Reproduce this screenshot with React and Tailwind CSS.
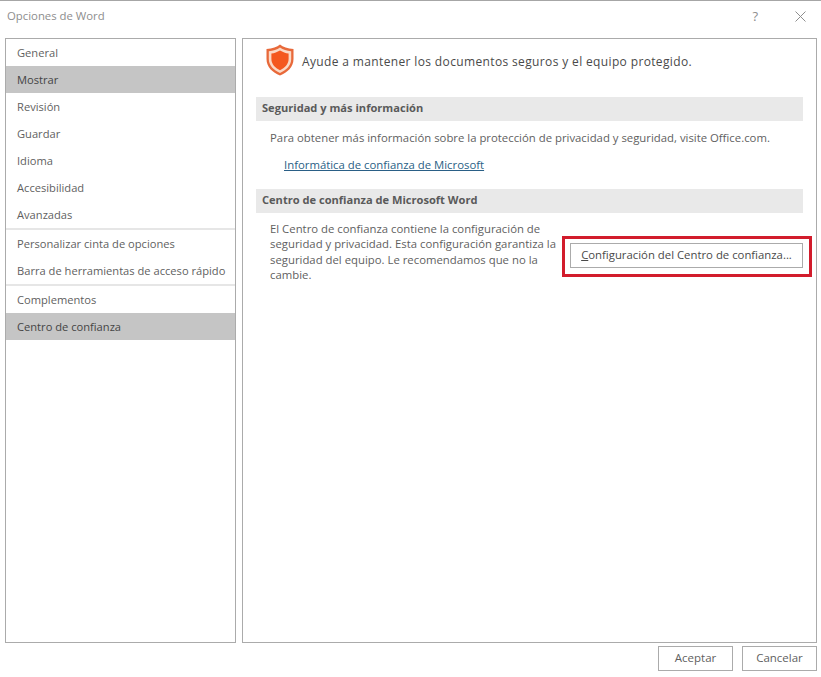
import React from 'react';

const navGroups = [
  [
    { label: 'General' },
    { label: 'Mostrar', active: true },
    { label: 'Revisión' },
    { label: 'Guardar' },
    { label: 'Idioma' },
    { label: 'Accesibilidad' },
    { label: 'Avanzadas' },
  ],
  [{ label: 'Personalizar cinta de opciones' }, { label: 'Barra de herramientas de acceso rápido' }],
  [{ label: 'Complementos' }, { label: 'Centro de confianza', active: true }],
];

const ShieldIcon = () => (
  <svg width="28" height="32" viewBox="0 0 28 32" className="shrink-0">
    <path d="M14 0.5 C17 3 21.5 4.6 27.5 5 V15 C27.5 23 21.5 28.5 14 31.5 C6.5 28.5 0.5 23 0.5 15 V5 C6.5 4.6 11 3 14 0.5 Z" fill="#e8693a" />
    <path d="M14 3.4 C17 5.4 20.8 6.8 25.2 7.2 V15 C25.2 21.6 20.2 26.2 14 29 C7.8 26.2 2.8 21.6 2.8 15 V7.2 C7.2 6.8 11 5.4 14 3.4 Z" fill="#fbd9c6" />
    <path d="M14 6.4 C16.8 8 19.6 9.1 22.6 9.5 V15 C22.6 20.2 18.8 23.8 14 26.2 C9.2 23.8 5.4 20.2 5.4 15 V9.5 C8.4 9.1 11.2 8 14 6.4 Z" fill="#f4581f" />
  </svg>
);

const SectionHeader = ({ children }) => (
  <div className="h-6 bg-[#e9e9e9] pl-[6px] pb-[2px] flex items-center text-[11.1px] font-bold text-[#5a5a5a]">{children}</div>
);

const App = () => {
  return (
    <div className="w-[821px] h-[677px] overflow-hidden bg-white flex flex-col border-t border-[#a6a6a6] text-[11.35px] text-[#5f5f5f] font-['Open_Sans','Noto_Sans',sans-serif]">
      <div className="h-[37px] shrink-0 flex items-center justify-between pl-[7px] pr-[15px] pb-[7px]">
        <span className="text-[#8e8e8e]">Opciones de Word</span>
        <div className="flex items-center gap-[37px]">
          <span className="text-[#8e8e8e] text-[13px] leading-none">?</span>
          <svg width="11" height="11" viewBox="0 0 11 11" stroke="#8e8e8e" strokeWidth="1"><path d="M0.5 0.5 L10.5 10.5 M10.5 0.5 L0.5 10.5" /></svg>
        </div>
      </div>

      <div className="h-[605px] shrink-0 flex gap-[6px] pl-[5px] pr-[4px]">
        <nav className="w-[231px] border border-[#ababab] text-[11.15px]">
          {navGroups.map((group, i) => (
            <div key={i} className={i > 0 ? 'border-t-2 border-[#e6e6e6]' : ''}>
              {group.map((item) => (
                <div
                  key={item.label}
                  className={`h-[27px] pl-[11px] pt-[2px] flex items-center whitespace-nowrap ${item.active ? 'bg-[#c5c5c5] text-[#444444]' : ''}`}
                >
                  {item.label}
                </div>
              ))}
            </div>
          ))}
        </nav>

        <main className="flex-1 border border-[#ababab] pl-[13px] pr-[13px]">
          <div className="h-[58px] flex items-start gap-2 pl-[10px] pt-[5px]">
            <ShieldIcon />
            <span className="text-xs tracking-[0.36px] mt-[10px] text-[#4a4a4a]">Ayude a mantener los documentos seguros y el equipo protegido.</span>
          </div>

          <SectionHeader>Seguridad y más información</SectionHeader>
          <p className="pl-[14px] mt-[9px] leading-[16px]">
            Para obtener más información sobre la protección de privacidad y seguridad, visite Office.com.
          </p>
          <p className="pl-[28px] mt-[11px] leading-[16px]">
            <a href="#" className="text-[#2a5f86] underline">Informática de confianza de Microsoft</a>
          </p>

          <div className="mt-4">
            <SectionHeader>Centro de confianza de Microsoft Word</SectionHeader>
          </div>

          <div className="flex justify-between mt-[8px] mr-[-9px]">
            <p className="w-[302px] pl-[14px] leading-[15.4px] shrink-0">
              El Centro de confianza contiene la configuración de seguridad y privacidad. Esta configuración garantiza la seguridad del equipo. Le recomendamos que no la cambie.
            </p>
            <div className="w-[250px] h-[41px] mt-[15px] border-[3px] border-[#d21c2c] pl-[5px] pr-[6px] pt-[4px]">
              <button className="w-full h-[25px] pb-[2px] border border-[#ababab] bg-white text-[11.35px] text-[#4a4a4a] whitespace-nowrap">
                <span className="underline">C</span>onfiguración del Centro de confianza...
              </button>
            </div>
          </div>
        </main>
      </div>

      <div className="flex justify-end gap-[9px] pr-[4px] pt-[3px]">
        <button className="w-[75px] h-[25px] pb-[2px] border border-[#ababab] bg-white text-[11.5px] text-[#5f5f5f]">Aceptar</button>
        <button className="w-[75px] h-[25px] pb-[2px] border border-[#ababab] bg-white text-[11.5px] text-[#5f5f5f]">Cancelar</button>
      </div>
    </div>
  );
};

export default App;
